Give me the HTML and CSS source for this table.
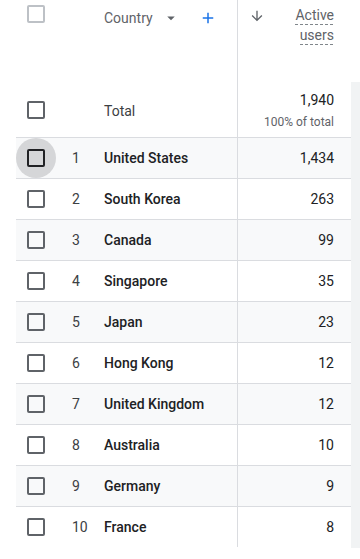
FILE: index.html
```html
<!DOCTYPE html>
<html>
<head>
<meta charset="utf-8">
<link rel="stylesheet" href="styles.css">
</head>
<body>
<div class="table">
  <div class="head">
    <div class="cell-check head-check"><span class="box box-disabled"></span></div>
    <div class="head-dim">
      <span class="dim-label">Country</span>
      <svg class="drop" viewBox="0 0 24 24" width="18" height="18"><path d="M7 10l5 5 5-5z" fill="#5f6368"/></svg>
      <svg class="plus" viewBox="0 0 24 24" width="18" height="18"><path d="M19 13h-6v6h-2v-6H5v-2h6V5h2v6h6v2z" fill="#1a73e8"/></svg>
    </div>
    <div class="head-metric">
      <svg class="sort" viewBox="0 0 24 24" width="16" height="16"><path d="M20 12l-1.41-1.41L13 16.17V4h-2v12.17l-5.58-5.59L4 12l8 8 8-8z" fill="#5f6368"/></svg>
      <div class="metric-label"><span class="dash">Active</span><br><span class="dash">users</span></div>
    </div>
  </div>
  <div class="bodywrap">
    <div class="rows">
      <div class="row total">
        <div class="cell-check"><span class="box"></span></div>
        <div class="cell-num"></div>
        <div class="cell-name total-label">Total</div>
        <div class="cell-metric total-metric">
          <div class="total-value">1,940</div>
          <div class="total-sub">100% of total</div>
        </div>
      </div>
      <div class="row odd">
        <div class="cell-check"><span class="hover"><span class="box box-hover"></span></span></div>
        <div class="cell-num">1</div>
        <div class="cell-name">United States</div>
        <div class="cell-metric">1,434</div>
      </div>
      <div class="row">
        <div class="cell-check"><span class="box"></span></div>
        <div class="cell-num">2</div>
        <div class="cell-name">South Korea</div>
        <div class="cell-metric">263</div>
      </div>
      <div class="row odd">
        <div class="cell-check"><span class="box"></span></div>
        <div class="cell-num">3</div>
        <div class="cell-name">Canada</div>
        <div class="cell-metric">99</div>
      </div>
      <div class="row">
        <div class="cell-check"><span class="box"></span></div>
        <div class="cell-num">4</div>
        <div class="cell-name">Singapore</div>
        <div class="cell-metric">35</div>
      </div>
      <div class="row odd">
        <div class="cell-check"><span class="box"></span></div>
        <div class="cell-num">5</div>
        <div class="cell-name">Japan</div>
        <div class="cell-metric">23</div>
      </div>
      <div class="row">
        <div class="cell-check"><span class="box"></span></div>
        <div class="cell-num">6</div>
        <div class="cell-name">Hong Kong</div>
        <div class="cell-metric">12</div>
      </div>
      <div class="row odd">
        <div class="cell-check"><span class="box"></span></div>
        <div class="cell-num">7</div>
        <div class="cell-name">United Kingdom</div>
        <div class="cell-metric">12</div>
      </div>
      <div class="row">
        <div class="cell-check"><span class="box"></span></div>
        <div class="cell-num">8</div>
        <div class="cell-name">Australia</div>
        <div class="cell-metric">10</div>
      </div>
      <div class="row odd">
        <div class="cell-check"><span class="box"></span></div>
        <div class="cell-num">9</div>
        <div class="cell-name">Germany</div>
        <div class="cell-metric">9</div>
      </div>
      <div class="row last">
        <div class="cell-check"><span class="box"></span></div>
        <div class="cell-num">10</div>
        <div class="cell-name">France</div>
        <div class="cell-metric">8</div>
      </div>
    </div>
    <div class="strip"></div>
  </div>
</div>
</body>
</html>
```

FILE: styles.css
```css
* { box-sizing: border-box; }
html, body { margin: 0; padding: 0; background: #fff; }
body {
  font-family: Roboto, "Liberation Sans", Arial, sans-serif;
  font-size: 14px;
  color: #202124;
  width: 360px;
  height: 559px;
  overflow: hidden;
}
.table { padding-left: 16px; }

.head {
  display: grid;
  grid-template-columns: 40px 181px 114px;
  height: 82px;
}
.head-check {
  align-items: flex-start !important;
  padding-top: 5px;
}
.head-dim {
  display: flex;
  align-items: center;
  align-self: start;
  height: 20px;
  margin-top: 8px;
  padding-left: 48px;
  color: #5f6368;
  line-height: 20px;
}
.dim-label { margin-right: 9px; }
.drop { display: block; }
.plus { display: block; margin-left: 19px; }

.head-metric {
  border-left: 1px solid #dadce0;
  display: flex;
  justify-content: space-between;
  padding: 5px 17px 0 11px;
}
.sort { display: block; margin-top: 3px; }
.metric-label {
  text-align: right;
  line-height: 20px;
  color: #5f6368;
}
.dash {
  padding-bottom: 2px;
  background-image: repeating-linear-gradient(to right, #80868b 0 3px, transparent 3px 5px);
  background-size: 100% 1px;
  background-repeat: no-repeat;
  background-position: left bottom;
}

.bodywrap { display: flex; }
.rows { width: 335px; }
.strip { flex: 1; background: #f1f3f4; height: 466px; }

.row {
  display: grid;
  grid-template-columns: 40px 48px 133px 114px;
  height: 41px;
  border-bottom: 1px solid #dadce0;
}
.row.odd { background: #f8f9fa; }
.row.last { border-bottom: none; height: 40px; }
.row.total { height: 56px; }

.cell-check {
  display: flex;
  align-items: center;
  justify-content: center;
}
.box {
  display: block;
  width: 18px;
  height: 18px;
  border: 2px solid #5f6368;
  border-radius: 2px;
}
.box-disabled { border-color: #bdc1c6; }
.box-hover { border-color: #202124; }
.hover {
  display: flex;
  align-items: center;
  justify-content: center;
  width: 40px;
  height: 40px;
  border-radius: 50%;
  background: #d5d6d8;
}
.cell-num {
  display: flex;
  align-items: center;
  padding-left: 16px;
  color: #3c4043;
}
.cell-name {
  display: flex;
  align-items: center;
  font-weight: 500;
  white-space: nowrap;
}
.total-label { font-weight: 400; color: #3c4043; padding-top: 2px; }
.cell-metric {
  border-left: 1px solid #dadce0;
  display: flex;
  align-items: center;
  justify-content: flex-end;
  padding-right: 17px;
}
.total-metric {
  flex-direction: column;
  align-items: flex-end;
  justify-content: center;
}
.total-value { line-height: 20px; }
.total-sub {
  font-size: 12px;
  line-height: 16px;
  margin-top: 4px;
  color: #5f6368;
}
```
